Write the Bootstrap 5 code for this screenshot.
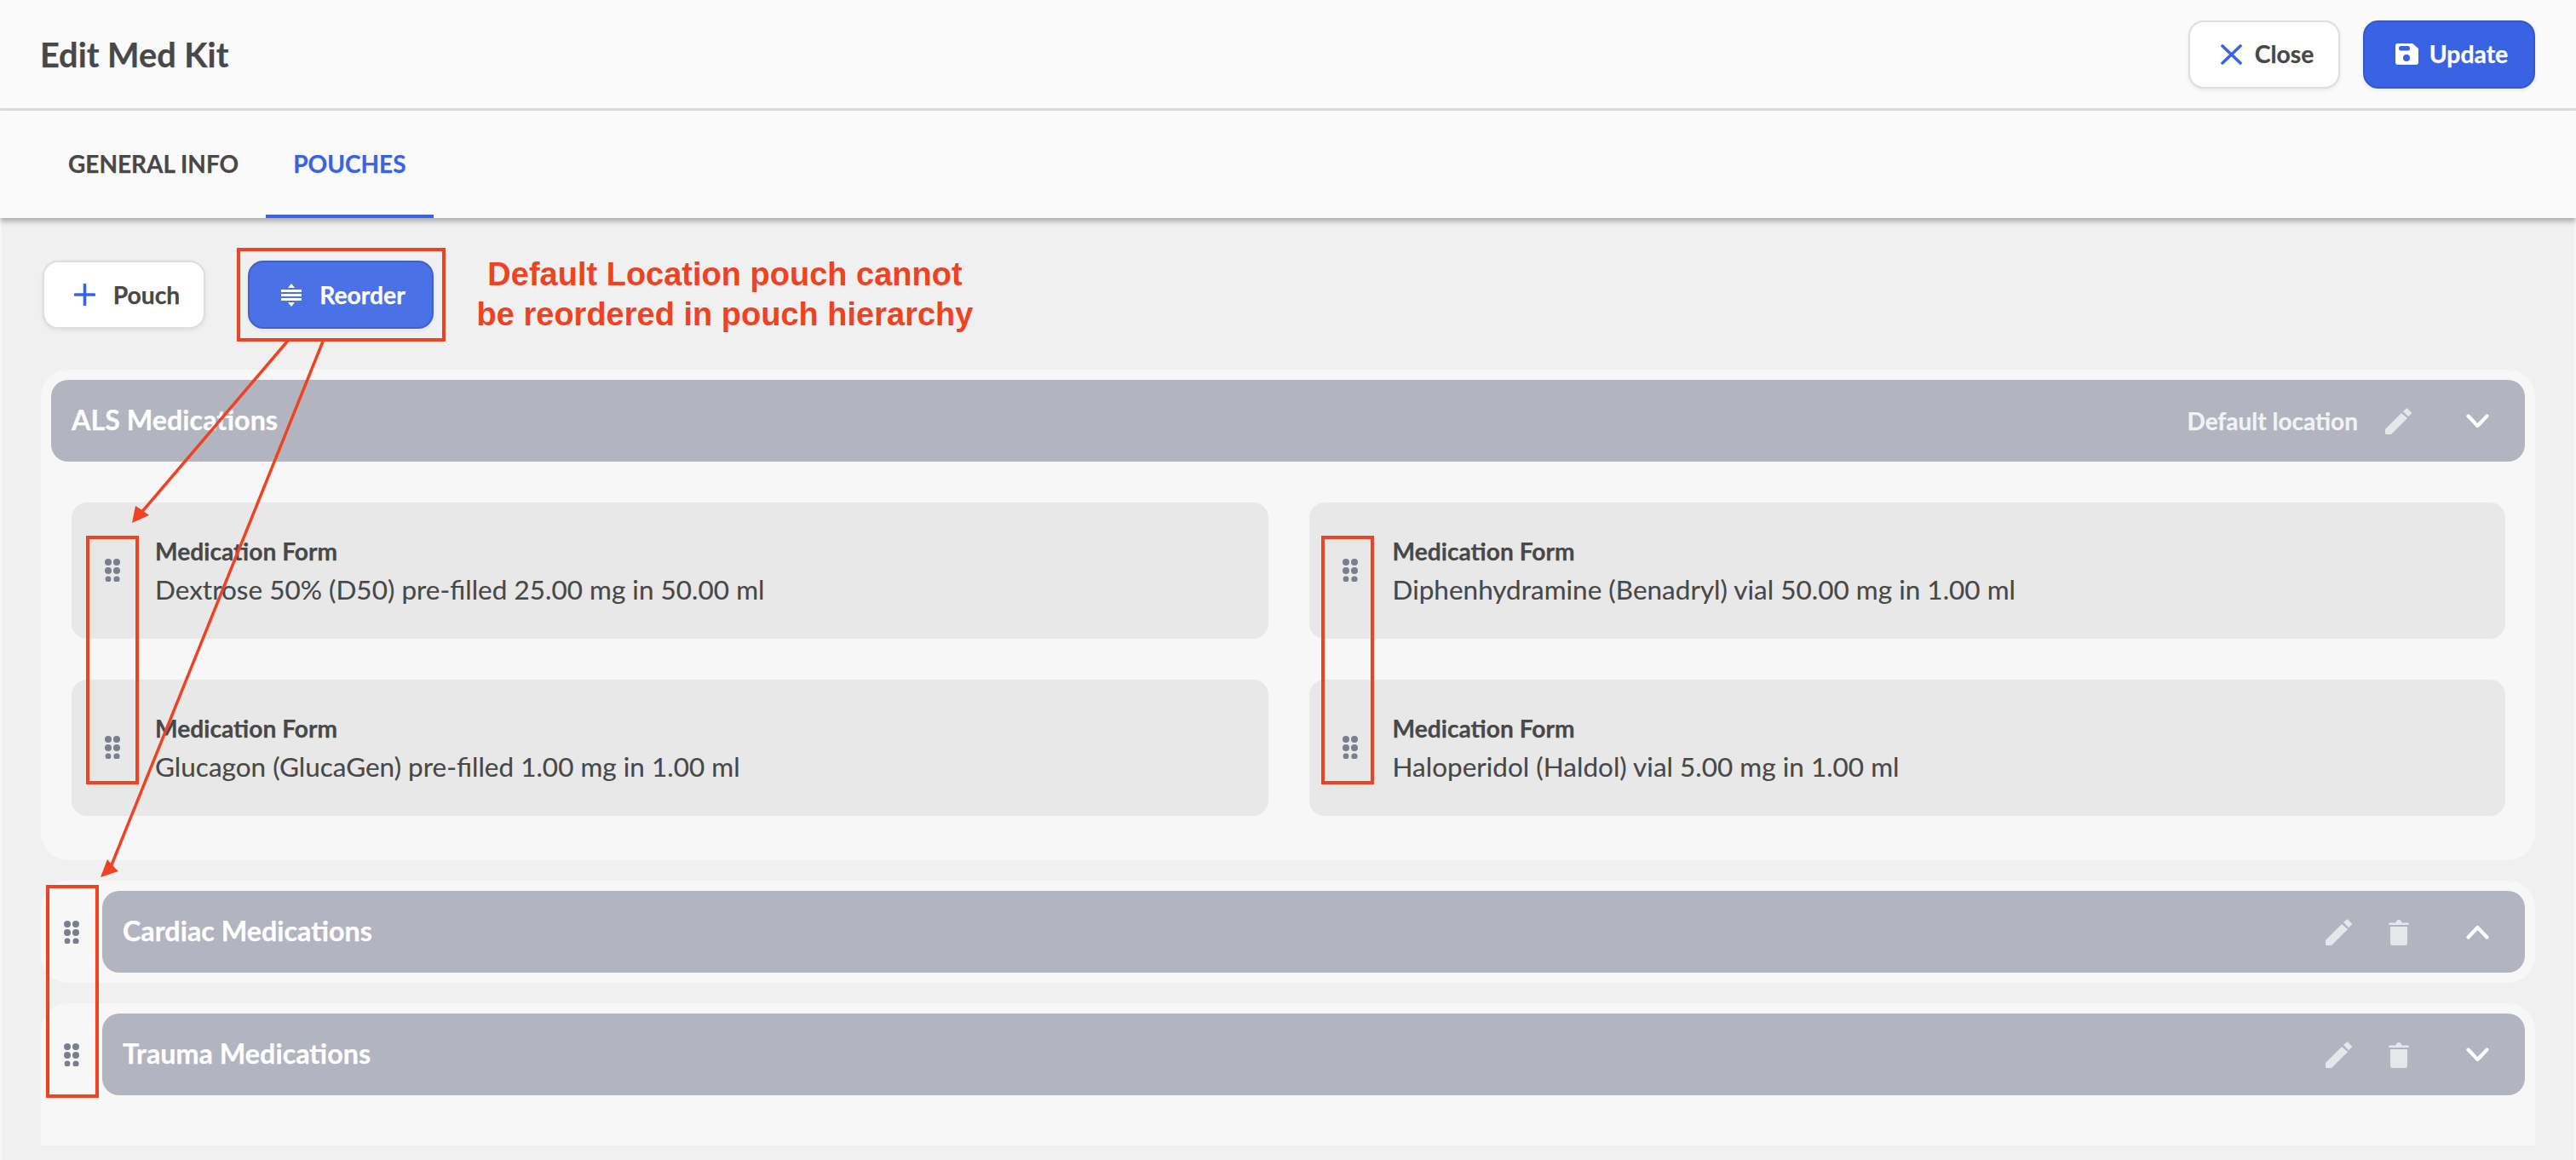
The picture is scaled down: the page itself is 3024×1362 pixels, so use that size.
<!DOCTYPE html>
<html lang="en"><head><meta charset="utf-8"><title>Edit Med Kit</title>
<link href="https://cdn.jsdelivr.net/npm/bootstrap@5.3.0/dist/css/bootstrap.min.css" rel="stylesheet">
<style>
html,body{height:1362px;overflow:hidden}
body{position:relative;background:#f6f6f6;font-family:Lato,"Open Sans",sans-serif;color:#484848;font-weight:700;-webkit-text-stroke:.25px currentColor}
.kit-head{height:130px;background:#fafafa;border-bottom:3px solid #dcdcdc;padding:0 48px 0 47px}
.kit-title{font-size:39.7px;font-weight:700;color:#484848;margin:0;line-height:1}
.kit-btn{height:80px;border-radius:18px;font-size:28.3px;font-weight:700;font-family:inherit;display:inline-flex;align-items:center;justify-content:center;padding:0;box-shadow:0 2px 5px rgba(0,0,0,.07)}
.kit-white{background:#fff;border:2px solid #dedede;color:#484848}
.kit-white:hover{background:#fff;border-color:#dedede;color:#484848}
.kit-close{width:178px;gap:15px;padding-left:7px}
.kit-update{width:202px;gap:13px;padding-left:6px;margin-left:27px;background:#3a63e3;border:2px solid #3258d0;color:#fff}
.kit-pouch{width:191px;gap:21px;padding-left:7px}
.kit-reorder{width:218px;gap:21px;padding-left:6px;background:#4a72e6;border:2px solid #3f62c4;color:#fff}
.kit-tabs{height:126px;background:#fafafa;padding-left:48px;position:relative;box-shadow:0 4px 6px rgba(0,0,0,.28);margin:0}
.kit-tab{font-size:28px;font-weight:700;color:#484848;padding:2px 32px 0;display:flex;align-items:center;height:126px;border-bottom:4px solid transparent}
.kit-tab:hover{color:#484848}
.kit-tab.active{color:#3a63e3;border-bottom-color:#3a63e3}
.kit-main{margin:0 2px;height:1106px;background:#f0f0f0;padding:50px 46px 0 46px;overflow:hidden}
.kit-toolbar{height:80px;margin-bottom:48px;padding-left:2px;gap:50px}
.kit-note{font-family:"Liberation Sans",Arial,sans-serif;font-weight:700;font-size:38px;line-height:47px;color:#ee4323;text-align:center;width:600px;margin-left:-8px;-webkit-text-stroke:0}
.kit-panel{background:#f7f7f7;border-radius:32px;padding:12px}
.kit-panel-open{height:576px}
.kit-panel-row{height:120px;margin-top:24px;padding-left:0}
.kit-panel-last{height:167px;border-radius:32px 32px 0 0}
.kit-bar{height:96px;background:#b2b4c0;border-radius:20px;color:#fff;padding:0 42px 0 24px;flex:1 1 auto}
.kit-bar-name{font-size:32.3px;line-height:1;color:#fff;margin-bottom:2px}
.kit-bar-note{font-size:28px;line-height:1;color:#f3f3f5;margin-right:32px}
.kit-pen{width:32px;height:31px}
.kit-bin{width:24px;height:31px;margin-left:42px}
.kit-chev{width:27px;height:17px;margin-left:67px}
.kit-chev-a{margin-left:63px}
.kit-grip{width:18px;height:27px;flex:none}
.kit-grip-slot{width:72px;height:96px;flex:none;align-items:center;justify-content:center}
.kit-grid{padding:48px 23px 0 24px}
.kit-grid-inner{--bs-gutter-x:48px;--bs-gutter-y:48px}
.kit-card{height:160px;background:#e8e8e8;border-radius:18px;padding:39px 0 0 39px;gap:41px}
.kit-card .kit-grip{margin-top:27px}
.kit-form{font-size:28.2px;line-height:36px;color:#484848}
.kit-med{font-size:31.5px;font-weight:400;line-height:44px;margin-top:5px;color:#484848;-webkit-text-stroke:.15px currentColor}
.kit-marks{position:absolute;left:0;top:0;pointer-events:none}
</style></head>
<body>
<header class="kit-head d-flex align-items-center justify-content-between">
  <h1 class="kit-title">Edit Med Kit</h1>
  <div class="d-flex">
    <button class="btn kit-btn kit-white kit-close"><svg width="25" height="24" viewBox="0 0 25 24"><path d="M2 2L23 22M23 2L2 22" stroke="#3a63e3" stroke-width="3.6" stroke-linecap="round" fill="none"/></svg>Close</button>
    <button class="btn kit-btn kit-update"><svg width="27" height="25" viewBox="0 0 27 25"><path d="M3 0H20L27 6V22a3 3 0 0 1-3 3H3a3 3 0 0 1-3-3V3a3 3 0 0 1 3-3Z" fill="#fff"/><rect x="4" y="3" width="13" height="5.5" rx="2.5" fill="#3a63e3"/><circle cx="13" cy="17" r="4" fill="#3a63e3"/></svg>Update</button>
  </div>
</header>
<nav class="nav kit-tabs">
  <a class="nav-link kit-tab" href="#">GENERAL INFO</a>
  <a class="nav-link kit-tab active" href="#">POUCHES</a>
</nav>
<main class="kit-main">
  <div class="d-flex align-items-center kit-toolbar">
    <button class="btn kit-btn kit-white kit-pouch"><svg width="25" height="26" viewBox="0 0 25 26"><path d="M12.5 1.5V24.5M1.5 13H23.5" stroke="#3a63e3" stroke-width="3.6" stroke-linecap="round" fill="none"/></svg>Pouch</button>
    <button class="btn kit-btn kit-reorder"><svg width="24" height="27" viewBox="0 0 24 27"><path d="M12 0L16 5H8ZM12 27L8 22H16Z" fill="#fff"/><path d="M0 8.5H24M0 13.5H24M0 18.5H24" stroke="#fff" stroke-width="3"/></svg>Reorder</button>
    <div class="kit-note">Default Location pouch cannot<br>be reordered in pouch hierarchy</div>
  </div>

  <section class="kit-panel kit-panel-open">
    <div class="kit-bar d-flex align-items-center">
      <span class="kit-bar-name me-auto">ALS Medications</span>
      <span class="kit-bar-note">Default location</span>
      <svg class="kit-pen" viewBox="0 0 32 31"><path d="M0 25L19 6L26 12L7 31H1.5Q0 31 0 29.5Z M21 4L25 .5Q25.5 0 26 .5L31 5.5Q31.5 6 31 6.5L27 10Z" fill="#e6e7ea"/></svg>
      <svg class="kit-chev kit-chev-a" viewBox="0 0 27 17"><path d="M2.5 2.5L13.5 14L24.5 2.5" fill="none" stroke="#fff" stroke-width="4.2" stroke-linecap="round" stroke-linejoin="round"/></svg>
    </div>
    <div class="kit-grid">
      <div class="row kit-grid-inner">
        <div class="col-6"><div class="kit-card d-flex"><svg class="kit-grip" viewBox="0 0 18 27"><g fill="#7a7f8e"><circle cx="4" cy="4" r="4"/><circle cx="14" cy="4" r="4"/><circle cx="4" cy="14" r="4"/><circle cx="14" cy="14" r="4"/><circle cx="4" cy="24" r="3.4"/><circle cx="14" cy="24" r="3.6"/></g></svg><div><div class="kit-form">Medication Form</div><div class="kit-med">Dextrose 50% (D50) pre-filled 25.00 mg in 50.00 ml</div></div></div></div>
        <div class="col-6"><div class="kit-card d-flex"><svg class="kit-grip" viewBox="0 0 18 27"><g fill="#7a7f8e"><circle cx="4" cy="4" r="4"/><circle cx="14" cy="4" r="4"/><circle cx="4" cy="14" r="4"/><circle cx="14" cy="14" r="4"/><circle cx="4" cy="24" r="3.4"/><circle cx="14" cy="24" r="3.6"/></g></svg><div><div class="kit-form">Medication Form</div><div class="kit-med">Diphenhydramine (Benadryl) vial 50.00 mg in 1.00 ml</div></div></div></div>
        <div class="col-6"><div class="kit-card d-flex"><svg class="kit-grip" viewBox="0 0 18 27"><g fill="#7a7f8e"><circle cx="4" cy="4" r="4"/><circle cx="14" cy="4" r="4"/><circle cx="4" cy="14" r="4"/><circle cx="14" cy="14" r="4"/><circle cx="4" cy="24" r="3.4"/><circle cx="14" cy="24" r="3.6"/></g></svg><div><div class="kit-form">Medication Form</div><div class="kit-med">Glucagon (GlucaGen) pre-filled 1.00 mg in 1.00 ml</div></div></div></div>
        <div class="col-6"><div class="kit-card d-flex"><svg class="kit-grip" viewBox="0 0 18 27"><g fill="#7a7f8e"><circle cx="4" cy="4" r="4"/><circle cx="14" cy="4" r="4"/><circle cx="4" cy="14" r="4"/><circle cx="14" cy="14" r="4"/><circle cx="4" cy="24" r="3.4"/><circle cx="14" cy="24" r="3.6"/></g></svg><div><div class="kit-form">Medication Form</div><div class="kit-med">Haloperidol (Haldol) vial 5.00 mg in 1.00 ml</div></div></div></div>
      </div>
    </div>
  </section>

  <section class="kit-panel kit-panel-row d-flex align-items-start">
    <div class="d-flex kit-grip-slot"><svg class="kit-grip" viewBox="0 0 18 27"><g fill="#7a7f8e"><circle cx="4" cy="4" r="4"/><circle cx="14" cy="4" r="4"/><circle cx="4" cy="14" r="4"/><circle cx="14" cy="14" r="4"/><circle cx="4" cy="24" r="3.4"/><circle cx="14" cy="24" r="3.6"/></g></svg></div>
    <div class="kit-bar d-flex align-items-center">
      <span class="kit-bar-name me-auto">Cardiac Medications</span>
      <svg class="kit-pen" viewBox="0 0 32 31"><path d="M0 25L19 6L26 12L7 31H1.5Q0 31 0 29.5Z M21 4L25 .5Q25.5 0 26 .5L31 5.5Q31.5 6 31 6.5L27 10Z" fill="#e6e7ea"/></svg>
      <svg class="kit-bin" viewBox="0 0 24 31"><path d="M2 4.5H8.5Q9 1 12 1T15.5 4.5H22Q24 4.5 24 5.8T22 7H2Q0 7 0 5.8T2 4.5Z" fill="#e6e7ea"/><path d="M2 9H22V28Q22 31 19 31H5Q2 31 2 28Z" fill="#e6e7ea"/></svg>
      <svg class="kit-chev" viewBox="0 0 27 17"><path d="M2.5 14.5L13.5 3L24.5 14.5" fill="none" stroke="#fff" stroke-width="4.2" stroke-linecap="round" stroke-linejoin="round"/></svg>
    </div>
  </section>

  <section class="kit-panel kit-panel-row kit-panel-last d-flex align-items-start">
    <div class="d-flex kit-grip-slot"><svg class="kit-grip" viewBox="0 0 18 27"><g fill="#7a7f8e"><circle cx="4" cy="4" r="4"/><circle cx="14" cy="4" r="4"/><circle cx="4" cy="14" r="4"/><circle cx="14" cy="14" r="4"/><circle cx="4" cy="24" r="3.4"/><circle cx="14" cy="24" r="3.6"/></g></svg></div>
    <div class="kit-bar d-flex align-items-center">
      <span class="kit-bar-name me-auto">Trauma Medications</span>
      <svg class="kit-pen" viewBox="0 0 32 31"><path d="M0 25L19 6L26 12L7 31H1.5Q0 31 0 29.5Z M21 4L25 .5Q25.5 0 26 .5L31 5.5Q31.5 6 31 6.5L27 10Z" fill="#e6e7ea"/></svg>
      <svg class="kit-bin" viewBox="0 0 24 31"><path d="M2 4.5H8.5Q9 1 12 1T15.5 4.5H22Q24 4.5 24 5.8T22 7H2Q0 7 0 5.8T2 4.5Z" fill="#e6e7ea"/><path d="M2 9H22V28Q22 31 19 31H5Q2 31 2 28Z" fill="#e6e7ea"/></svg>
      <svg class="kit-chev" viewBox="0 0 27 17"><path d="M2.5 2.5L13.5 14L24.5 2.5" fill="none" stroke="#fff" stroke-width="4.2" stroke-linecap="round" stroke-linejoin="round"/></svg>
    </div>
  </section>
</main>
<svg class="kit-marks" width="3024" height="1362" viewBox="0 0 3024 1362">
  <g fill="none" stroke="#ee4323" stroke-width="4">
    <rect x="280" y="293" width="241" height="106"/>
    <rect x="103" y="631" width="58" height="288"/>
    <rect x="1553" y="631" width="58" height="288"/>
    <rect x="56" y="1041" width="58" height="246"/>
  </g>
  <g stroke="#ee4323" stroke-width="3.5" fill="none">
    <path d="M338 400L165 603"/>
    <path d="M379 401L130 1018"/>
  </g>
  <g fill="#ee4323">
    <path d="M155 614L175 605L167 599L159 594Z"/>
    <path d="M118 1030L139 1023L133 1017L126 1009Z"/>
  </g>
</svg>
</body></html>
